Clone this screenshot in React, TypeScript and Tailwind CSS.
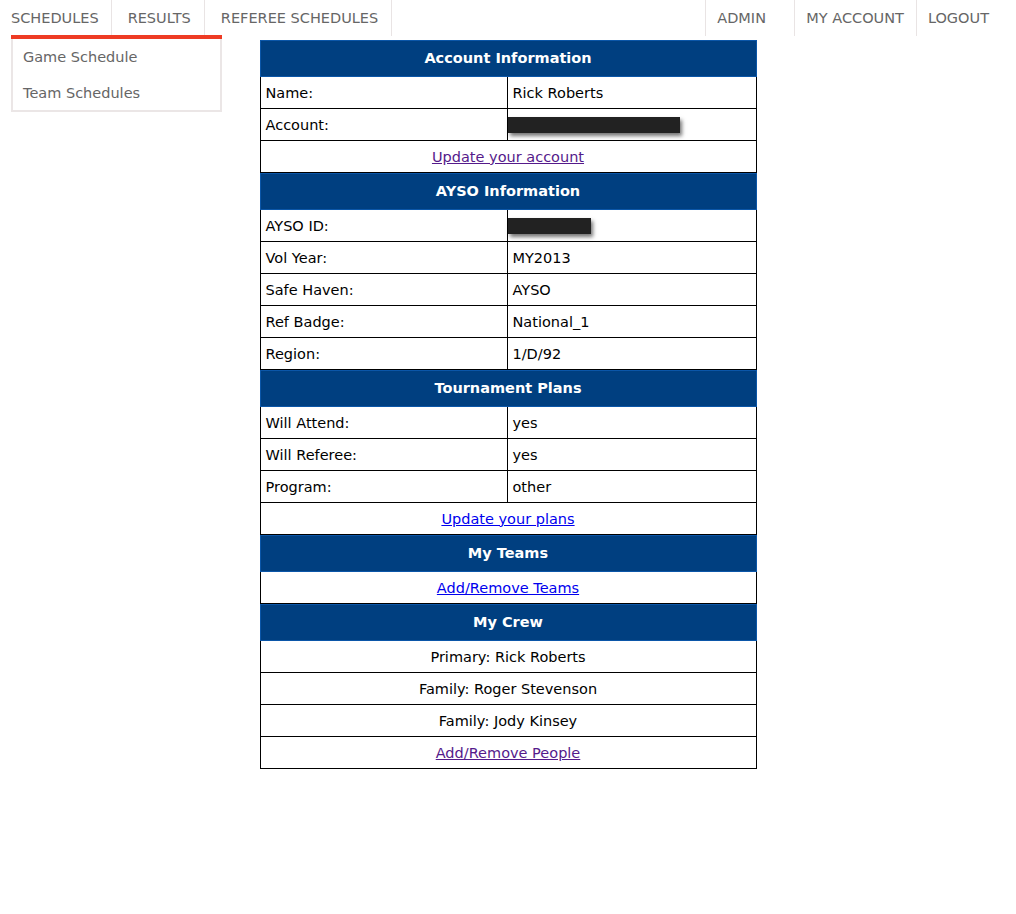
import React from 'react';

// Referee portal: account summary page

type Row = { label: string; value?: string; redact?: number };

const font = { fontFamily: '"DejaVu Sans", Verdana, sans-serif' };

function SectionHeader({ title }: { title: string }) {
  return (
    <div className="flex h-[37px] items-center justify-center border border-[#0b56a8] bg-[#003f80] text-[14.5px] font-bold text-white">
      {title}
    </div>
  );
}

function InfoRow({ label, value, redact }: Row) {
  return (
    <div className="flex h-[32px] border-x border-b border-black text-[14.5px] text-black">
      <div className="flex w-[247px] items-center border-r border-black pl-[5px] pt-[2px]">{label}</div>
      <div className="flex flex-1 items-center pl-[5px] pt-[2px]">
        {redact ? (
          <span
            className="-ml-[5px] -mt-[2px] inline-block h-[16px] bg-[#222] shadow-[2px_3px_4px_rgba(0,0,0,0.55)]"
            style={{ width: redact }}
          />
        ) : (
          value
        )}
      </div>
    </div>
  );
}

function CenterRow({ children }: { children: React.ReactNode }) {
  return (
    <div className="flex h-[32px] items-center justify-center border-x border-b border-black pt-[2px] text-[14.5px] text-black">
      {children}
    </div>
  );
}

function NavItem({ label, className }: { label: string; className: string }) {
  return (
    <div className={'flex h-[36px] items-center pt-[2px] text-[14.5px] text-[#666] ' + className}>{label}</div>
  );
}

export default function App() {
  return (
    <div className="relative min-h-[914px] bg-white" style={font}>
      {/* Top navigation */}
      <div className="flex h-[36px] justify-between">
        <div className="flex">
          <NavItem label="SCHEDULES" className="border-r border-[#e9e4e4] pl-[11px] pr-[12px]" />
          <NavItem label="RESULTS" className="border-r border-[#e9e4e4] pl-[16px] pr-[13px]" />
          <NavItem label="REFEREE SCHEDULES" className="border-r border-[#e9e4e4] pl-[16px] pr-[13px]" />
        </div>
        <div className="flex">
          <NavItem label="ADMIN" className="w-[90px] border-l border-r border-[#e9e4e4] pl-[11px]" />
          <NavItem label="MY ACCOUNT" className="border-r border-[#e9e4e4] pl-[11px] pr-[12px]" />
          <NavItem label="LOGOUT" className="pl-[11px] pr-[27px]" />
        </div>
      </div>

      {/* Schedules dropdown */}
      <div className="absolute left-[11px] top-[35px] z-10 w-[211px] border-t-4 border-[#ee3b24] bg-white">
        <div className="border-x-2 border-b-2 border-[#ebe6e6]">
          <div className="flex h-[36px] items-center pl-[10px] pt-[2px] text-[14.5px] text-[#666]">Game Schedule</div>
          <div className="flex h-[35px] items-center pl-[10px] pt-[2px] text-[14.5px] text-[#666]">Team Schedules</div>
        </div>
      </div>

      {/* Account summary */}
      <div className="mx-auto mt-[4px] w-[497px]">
        <SectionHeader title="Account Information" />
        <InfoRow label="Name:" value="Rick Roberts" />
        <InfoRow label="Account:" redact={172} />
        <CenterRow>
          <a href="#" className="text-[#551a8b] underline">Update your account</a>
        </CenterRow>

        <SectionHeader title="AYSO Information" />
        <InfoRow label="AYSO ID:" redact={83} />
        <InfoRow label="Vol Year:" value="MY2013" />
        <InfoRow label="Safe Haven:" value="AYSO" />
        <InfoRow label="Ref Badge:" value="National_1" />
        <InfoRow label="Region:" value="1/D/92" />

        <SectionHeader title="Tournament Plans" />
        <InfoRow label="Will Attend:" value="yes" />
        <InfoRow label="Will Referee:" value="yes" />
        <InfoRow label="Program:" value="other" />
        <CenterRow>
          <a href="#" className="text-[#0000ee] underline">Update your plans</a>
        </CenterRow>

        <SectionHeader title="My Teams" />
        <CenterRow>
          <a href="#" className="text-[#0000ee] underline">Add/Remove Teams</a>
        </CenterRow>

        <SectionHeader title="My Crew" />
        <CenterRow>Primary: Rick Roberts</CenterRow>
        <CenterRow>Family: Roger Stevenson</CenterRow>
        <CenterRow>Family: Jody Kinsey</CenterRow>
        <CenterRow>
          <a href="#" className="text-[#551a8b] underline">Add/Remove People</a>
        </CenterRow>
      </div>
    </div>
  );
}
